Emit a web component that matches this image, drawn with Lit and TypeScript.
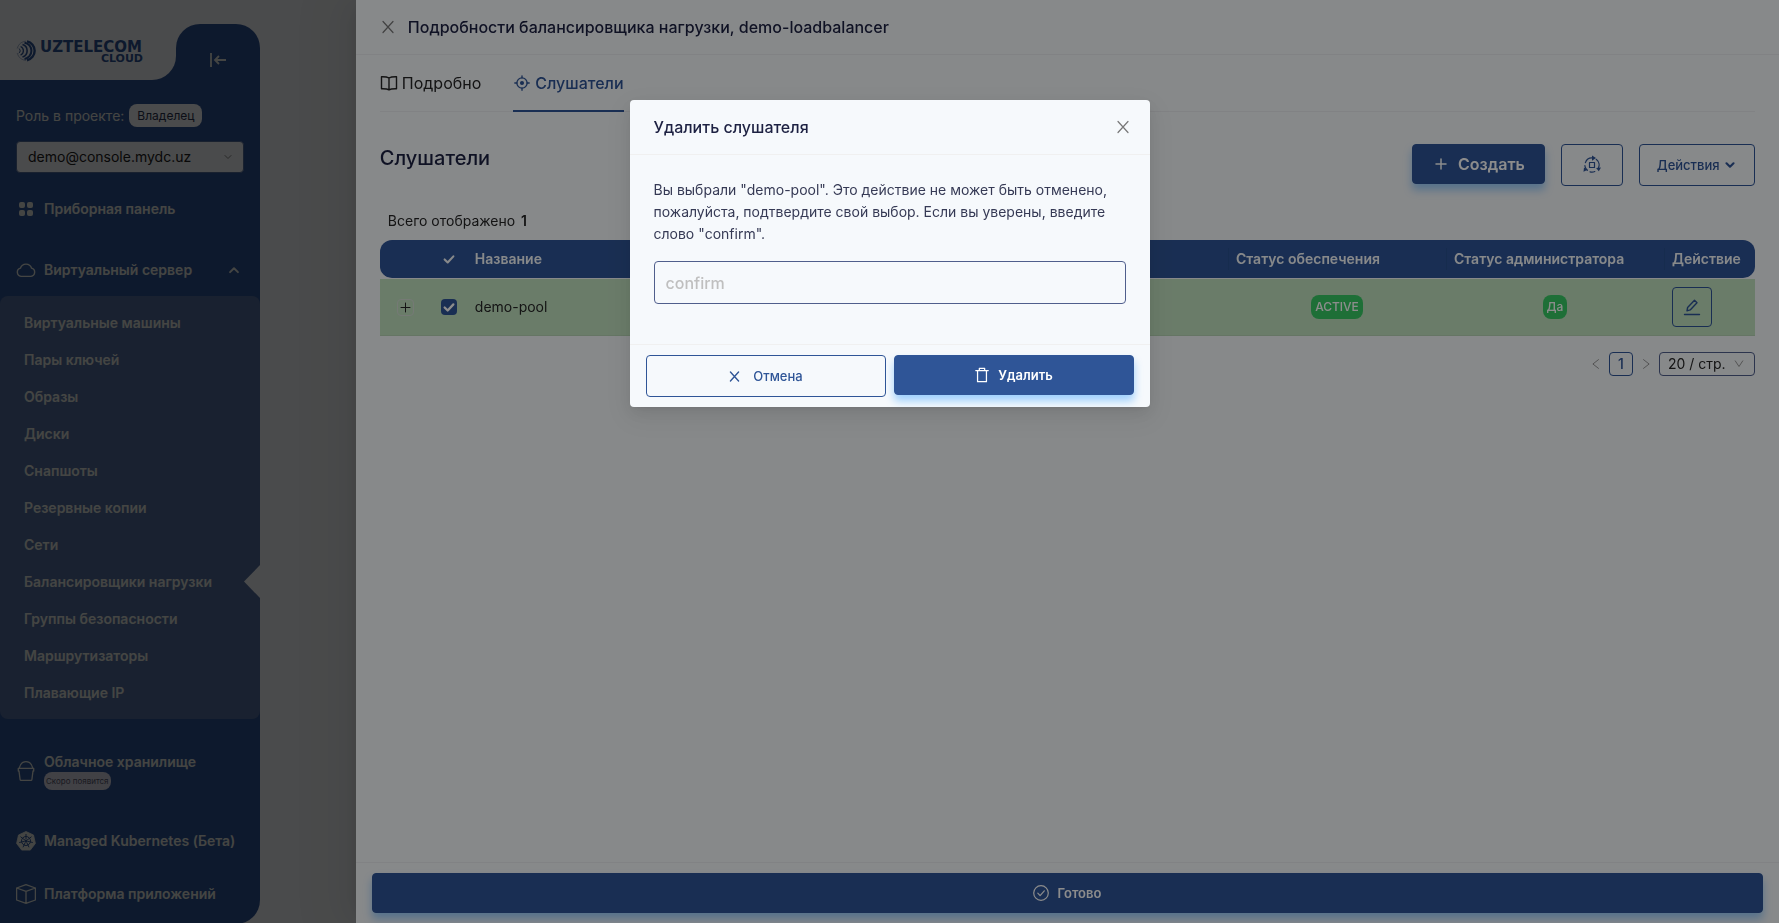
import { LitElement, html, css, svg, nothing } from "lit";
import { customElement } from "lit/decorators.js";
import { classMap } from "lit/directives/class-map.js";

const FONT = css`
  :host {
    font-family: Inter, "Open Sans", sans-serif;
    font-size: 14px;
    line-height: 22px;
  }
  *,
  *::before,
  *::after {
    box-sizing: border-box;
  }
  button,
  input,
  select {
    font: inherit;
    margin: 0;
    cursor: pointer;
  }
  svg {
    display: block;
    flex: none;
  }
`;

const icon = (size: number, box: string, body: unknown, width = 2) => html`
  <svg width=${size} height=${size} viewBox=${box} fill="none" stroke="currentColor" stroke-width=${width} stroke-linecap="round" stroke-linejoin="round" aria-hidden="true">${body}</svg>
`;

const closeIcon = (size: number, w = 1.2) => icon(size, "0 0 16 16", svg`<path d="M3 2.5 13 13.5M13 2.5 3 13.5" />`, w);
const chevron = (size: number, d: string, w: number) => icon(size, "0 0 16 16", svg`<path d=${d} />`, w);

const gridIcon = html`
  <svg width="20" height="20" viewBox="0 0 20 20" fill="currentColor" aria-hidden="true">
    <rect x="3" y="3" width="6" height="6" rx="2" /><rect x="11" y="3" width="6" height="6" rx="2" />
    <rect x="3" y="11" width="6" height="6" rx="2" /><rect x="11" y="11" width="6" height="6" rx="2" />
  </svg>
`;
const cloudIcon = icon(20, "0 0 20 20", svg`<path d="M5 16.400a4.200 4.200 0 0 1-.6-8.200 5.900 5.900 0 0 1 11.200 0 4.200 4.200 0 0 1-.6 8.200Z" />`, 1.4);
const bucketIcon = icon(20, "0 0 20 20", svg`<path d="M2.300 7.300h15.400v2.700h-.7L15.900 18.500q-.1.900-1 .9H5.100q-.9 0-1-.9L3 10H2.300ZM3.300 7C4.200 3 6.700.7 10 .7s5.800 2.300 6.700 6.300" />`, 1.3);
const cubeIcon = icon(20, "0 0 20 20", svg`<path d="M10 .7 19.400 4v12L10 19.300.6 16V4ZM.6 4 10 7.400 19.400 4M10 7.400v12" />`, 1.3);
const wheelIcon = html`
  <svg width="20" height="20" viewBox="0 0 20 20" aria-hidden="true">
    <path d="M10 .5 17.500 4 19.400 12.400 14.300 19.100H5.700L.6 12.400 2.500 4Z" fill="currentColor" stroke="currentColor" stroke-width=".8" stroke-linejoin="round" />
    <g fill="none" stroke="#2f5597" stroke-width="1">
      <circle cx="10" cy="10" r="4.500" />
      <path d="M10 3v5.500M15.500 5.700 11 9.200M16.800 11.500 11.300 10.300M13 16.300 10.700 11.300M7 16.300 9.300 11.300M3.200 11.500 8.700 10.300M4.500 5.700 9 9.200" />
    </g>
    <circle cx="10" cy="10" r="1.200" fill="#2f5597" />
  </svg>
`;

interface MenuEntry {
  label: string;
  active?: boolean;
}

const SERVER_ITEMS: MenuEntry[] = [
  { label: "Виртуальные машины" },
  { label: "Пары ключей" },
  { label: "Образы" },
  { label: "Диски" },
  { label: "Снапшоты" },
  { label: "Резервные копии" },
  { label: "Сети" },
  { label: "Балансировщики нагрузки", active: true },
  { label: "Группы безопасности" },
  { label: "Маршрутизаторы" },
  { label: "Плавающие IP" },
];

@customElement("side-bar")
export class SideBar extends LitElement {
  static styles = [
    FONT,
    css`
      :host {
        display: flex;
        flex-direction: column;
        width: 260px;
        min-height: 100vh;
        color: #e4e8e0;
      }
      .head {
        display: flex;
        height: 80px;
        background: linear-gradient(#f6f9fc 56px, #2f5597 56px);
      }
      .logo {
        width: 176px;
        padding: 32px 0 0 16px;
        background: #f6f9fc;
        border-bottom-right-radius: 24px;
      }
      .logo text {
        font-family: "DejaVu Sans", sans-serif;
        font-weight: 700;
      }
      .collapse {
        flex: 1;
        display: flex;
        align-items: center;
        justify-content: center;
        margin-top: 24px;
        padding: 16px 0 0;
        border: 0;
        border-radius: 24px 24px 0 0;
        background: #2f5597;
        color: inherit;
      }
      .body {
        flex: 1;
        display: flex;
        flex-direction: column;
        padding-top: 24px;
        background: #2f5597;
        border-bottom-right-radius: 24px;
      }
      .role {
        display: flex;
        align-items: center;
        gap: 5px;
        padding: 0 16px;
      }
      .badge {
        padding: 0 8px;
        border-radius: 8px;
        background: #f6f9fc;
        color: #2b3350;
        font-size: 12px;
        line-height: 23px;
      }
      .project {
        display: grid;
        align-items: center;
        margin: 14px 16px 19px;
      }
      .project > * {
        grid-area: 1 / 1;
      }
      .project select {
        appearance: none;
        height: 32px;
        padding: 0 11px;
        border: 1px solid #55709f;
        border-radius: 4px;
        background: #f6f9fc;
        color: #222;
      }
      .project svg {
        justify-self: end;
        margin-right: 12px;
        color: #8a8a8a;
        pointer-events: none;
      }
      .item {
        display: flex;
        align-items: center;
        gap: 8px;
        height: 33px;
        padding: 0 16px;
        color: inherit;
        font-weight: 600;
        text-decoration: none;
      }
      .item.server {
        margin: 28px 0 10px;
      }
      .item .end {
        margin-left: auto;
        margin-right: 3px;
      }
      .sub {
        display: flex;
        flex-direction: column;
        padding: 8px 0;
        border-radius: 8px;
        background: #5670a0;
      }
      .sub a {
        position: relative;
        padding: 0 24px;
        color: inherit;
        font-weight: 600;
        line-height: 37px;
        text-decoration: none;
      }
      .sub a.active::after {
        content: "";
        position: absolute;
        right: 0;
        top: 2px;
        width: 16px;
        height: 33px;
        background: #f6f9fc;
        clip-path: polygon(100% 0, 0 50%, 100% 100%);
      }
      .item.tall {
        height: 42px;
        margin: 31px 0 32px;
      }
      .stack {
        display: flex;
        flex-direction: column;
        align-items: flex-start;
        line-height: 20px;
      }
      .soon {
        padding: 0 2px;
        border-radius: 8px;
        background: #d9d9e8;
        color: #55586c;
        font-size: 8px;
        font-weight: 400;
        line-height: 18px;
      }
      .item.platform {
        margin: 20px 0 14px;
      }
    `,
  ];

  render() {
    return html`
      <div class="head">
        <div class="logo">
          <svg width="144" height="40" viewBox="0 0 144 40" role="img" aria-label="UZTELECOM CLOUD" fill="#2f5597">
            <g fill="none" stroke="#2f5597" transform="translate(0 8)">
              <path d="M11 1.400a9.600 9.600 0 0 1 0 18.800" stroke-width="2.400" />
              <path d="M8.500 2.700a8.200 8.200 0 0 1 0 16.200" stroke-width="2" />
              <path d="M6.500 4.500a6.600 6.600 0 0 1 0 12.600" stroke-width="1.600" />
              <path d="M4.600 6.500a4.700 4.700 0 0 1 0 8.600" stroke-width="1.300" />
              <path d="M2.800 8.500a2.600 2.600 0 0 1 0 4.600" stroke-width="1" />
              <path d="M1.200 8.500C2.500 4 5.500 1.600 10 1.200M1.200 13C2.500 17.500 5.500 20 10 20.400" stroke-width=".8" opacity=".5" />
            </g>
            <text x="24" y="20" font-size="15">UZTELECOM</text>
            <text x="127" y="30" font-size="11" text-anchor="end">CLOUD</text>
          </svg>
        </div>
        <button class="collapse" aria-label="Свернуть меню">
          <svg width="18" height="16" viewBox="0 0 18 16" fill="none" stroke="currentColor" stroke-width="1.800" aria-hidden="true">
            <path d="M2 1v14M17 8H6M10 4 6 8l4 4" />
          </svg>
        </button>
      </div>
      <div class="body">
        <div class="role"><span>Роль в проекте:</span><span class="badge">Владелец</span></div>
        <div class="project">
          <select aria-label="Проект"><option>demo@console.mydc.uz</option></select>
          ${chevron(8, "M2 5l6 6 6-6", 2)}
        </div>
        <a class="item" href="#dashboard">${gridIcon}<span>Приборная панель</span></a>
        <a class="item server" href="#server">
          ${cloudIcon}<span>Виртуальный сервер</span><span class="end">${chevron(14, "M3.500 10.500l4.500-4.500 4.500 4.500", 2.2)}</span>
        </a>
        <nav class="sub">
          ${SERVER_ITEMS.map((i) => html`<a href="#item" class=${classMap({ active: !!i.active })}>${i.label}</a>`)}
        </nav>
        <a class="item tall" href="#storage">
          ${bucketIcon}<span class="stack"><span>Облачное хранилище</span><span class="soon">Скоро появится</span></span>
        </a>
        <a class="item" href="#kubernetes">${wheelIcon}<span>Managed Kubernetes (Бета)</span></a>
        <a class="item platform" href="#platform">${cubeIcon}<span>Платформа приложений</span></a>
      </div>
    `;
  }
}

@customElement("listener-drawer")
export class ListenerDrawer extends LitElement {
  static styles = [
    FONT,
    css`
      :host {
        display: flex;
        flex-direction: column;
        background: #f6f9fc;
        color: #262626;
        box-shadow: -6px 0 16px -8px rgba(0, 0, 0, 0.08), -9px 0 28px rgba(0, 0, 0, 0.05), -12px 0 48px 16px rgba(0, 0, 0, 0.03);
      }
      header {
        display: flex;
        align-items: center;
        gap: 12px;
        height: 55px;
        padding: 0 24px;
        border-bottom: 1px solid #ebedf0;
      }
      h1,
      h2 {
        margin: 0;
        color: #1d2142;
        font-weight: 500;
      }
      h1 {
        font-size: 16px;
      }
      h2 {
        font-size: 20px;
        line-height: 28px;
      }
      .plain {
        display: flex;
        padding: 0;
        border: 0;
        background: none;
        color: #777;
      }
      main {
        flex: 1;
        padding: 0 24px;
      }
      .tabs {
        display: flex;
        gap: 32px;
        height: 57px;
        border-bottom: 1px solid #ebedf0;
      }
      .tab {
        display: flex;
        align-items: center;
        gap: 4px;
        height: 57px;
        padding: 0;
        border: 0 solid transparent;
        border-bottom-width: 2px;
        background: none;
        color: #262626;
        font-size: 16px;
      }
      .tab.on {
        border-bottom-color: #2f5597;
        color: #2f5597;
        font-weight: 500;
      }
      .bar {
        display: flex;
        align-items: flex-start;
        gap: 16px;
        margin-top: 32px;
      }
      .bar h2 {
        margin-right: auto;
      }
      .btn {
        display: flex;
        align-items: center;
        justify-content: center;
        height: 42px;
        padding: 0 16px;
        border: 1px solid #2f5597;
        border-radius: 4px;
        background: transparent;
        color: #2f5597;
        font-size: 13px;
        font-weight: 500;
      }
      .btn.menu {
        padding: 0 17px;
      }
      .btn.primary {
        gap: 8px;
        height: 40px;
        padding: 0 19px;
        background: #2f5597;
        color: #fff;
        font-weight: 600;
        box-shadow: 0 6px 8px rgba(24, 144, 255, 0.4);
      }
      .btn.create {
        font-size: 16px;
      }
      .btn.sync {
        padding: 0 20px;
      }
      .btn.edit {
        width: 40px;
        height: 40px;
        padding: 0;
      }
      .total {
        margin: 24px 8px 8px;
      }
      .total b {
        margin-left: 2px;
        font-weight: 600;
      }
      table {
        width: 100%;
        table-layout: fixed;
        border-collapse: separate;
        border-spacing: 0;
      }
      .c-expand {
        width: 51px;
      }
      .c-check {
        width: 36px;
      }
      .c-status {
        width: 218px;
      }
      .c-action {
        width: 91px;
      }
      th {
        height: 39px;
        padding: 0 8px;
        border-bottom: 1px solid #f6f9fc;
        background: #2f5597;
        background-clip: padding-box;
        color: #f6f9fc;
        font-weight: 600;
        text-align: left;
      }
      th.sep {
        background-image: linear-gradient(#29508f, #29508f);
        background-size: 1px 22px;
        background-position: left center;
        background-repeat: no-repeat;
      }
      th:first-child {
        border-radius: 12px 0 0 12px;
      }
      th:last-child {
        border-radius: 0 12px 12px 0;
      }
      td {
        height: 57px;
        padding: 0 8px;
        border-bottom: 1px solid #b8d6b6;
        background: #c2e2c0;
      }
      td.mid {
        text-align: center;
      }
      .center {
        display: flex;
        justify-content: center;
      }
      .expand {
        width: 17px;
        height: 17px;
        align-items: center;
        justify-content: center;
        border: 1px solid #d5dfd6;
        border-radius: 4px;
        color: #262626;
      }
      .check {
        display: grid;
        place-items: center;
      }
      .check > * {
        grid-area: 1 / 1;
      }
      .check input {
        appearance: none;
        width: 16px;
        height: 16px;
        border-radius: 4px;
        background: #2f5597;
      }
      .check svg {
        color: #fff;
        pointer-events: none;
      }
      .tag {
        display: inline-block;
        padding: 0 4px;
        border-radius: 8px;
        background: #38ca64;
        color: #fff;
        font-size: 12px;
        font-weight: 500;
        line-height: 24px;
      }
      .pages {
        display: flex;
        align-items: center;
        justify-content: flex-end;
        gap: 8px;
        margin-top: 16px;
      }
      .pages .plain {
        color: #999;
      }
      .page {
        width: 24px;
        height: 24px;
        padding: 0;
        border: 1px solid #2f5597;
        border-radius: 4px;
        background: none;
        color: #2f5597;
        font-weight: 500;
      }
      .size {
        display: grid;
        align-items: center;
        width: 96px;
      }
      .size > * {
        grid-area: 1 / 1;
      }
      .size select {
        appearance: none;
        height: 24px;
        padding: 0 8px;
        border: 1px solid #505f8c;
        border-radius: 4px;
        background: none;
        color: #262626;
      }
      .size svg {
        justify-self: end;
        margin-right: 11px;
        color: #999;
        pointer-events: none;
      }
      footer {
        padding: 10px 16px;
        border-top: 1px solid #ebedf0;
      }
      footer .btn {
        width: 100%;
      }
    `,
  ];

  render() {
    const check = chevron(14, "M3 8.500l3.500 3.500L13 5", 2.4);
    const smallCheck = chevron(14, "M3 8.500l3.500 3.500L13 5", 2.6);
    return html`
      <header>
        <button class="plain" aria-label="Закрыть">${closeIcon(16)}</button>
        <h1>Подробности балансировщика нагрузки, demo-loadbalancer</h1>
      </header>
      <main>
        <div class="tabs" role="tablist">
          <button class="tab" role="tab">
            ${icon(18, "0 0 18 18", svg`<path d="M9 4v11.500M9 4C7.500 3 5 2.600 1.500 2.700v12c3.300-.1 6 .1 7.500 1.100 1.500-1 4.200-1.200 7.500-1.100v-12C13 2.600 10.500 3 9 4Z" />`, 1.4)}
            Подробно
          </button>
          <button class="tab on" role="tab" aria-selected="true">
            ${icon(18, "-1 -1 20 20", svg`<circle cx="9" cy="9" r="5.700" /><circle cx="9" cy="9" r="1.500" fill="currentColor" /><path d="M9 1v2.300M9 14.700V17M1 9h2.300M14.700 9H17" />`, 1.5)}
            Слушатели
          </button>
        </div>
        <div class="bar">
          <h2>Слушатели</h2>
          <button class="btn primary create">${icon(18, "0 0 18 18", svg`<path d="M9 4v10M4 9h10" />`, 1.5)}Создать</button>
          <button class="btn sync" aria-label="Обновить">
            ${icon(
              20,
              "0 0 20 20",
              svg`
                <path d="M7.500 7.500h5v5h-5ZM3.400 7.600A7.100 7.100 0 0 1 11 3M14.200 4.300A7.100 7.100 0 0 1 16.300 13.200M12.800 16.500A7.100 7.100 0 0 1 8 16.800M5.300 15.300A7.100 7.100 0 0 1 2.900 10.500" />
                <path stroke="none" fill="currentColor" d="M10 .4l4 2.700-4 2.700ZM19 12.600l-2.200 3.600-2.700-3.300ZM1.500 16.800l.5-4.300 3.600 2.300Z" />
              `,
              1.2,
            )}
          </button>
          <button class="btn menu">Действия&nbsp;${chevron(14, "M4 6l4 4 4-4", 2.4)}</button>
        </div>
        <div class="total">Всего отображено <b>1</b></div>
        <table>
          <colgroup>
            <col class="c-expand" /><col class="c-check" /><col /><col class="c-status" /><col class="c-status" /><col class="c-action" />
          </colgroup>
          <thead>
            <tr>
              <th></th>
              <th><span class="center">${check}</span></th>
              <th>Название</th>
              <th class="sep">Статус обеспечения</th>
              <th class="sep">Статус администратора</th>
              <th class="sep">Действие</th>
            </tr>
          </thead>
          <tbody>
            <tr>
              <td>
                <div class="center">
                  <button class="plain expand" aria-label="Развернуть">${icon(11, "0 0 11 11", svg`<path d="M5.500 1v9M1 5.500h9" />`, 1)}</button>
                </div>
              </td>
              <td><label class="check"><input type="checkbox" checked aria-label="demo-pool" />${smallCheck}</label></td>
              <td>demo-pool</td>
              <td class="mid"><span class="tag">ACTIVE</span></td>
              <td class="mid"><span class="tag">Да</span></td>
              <td>
                <button class="btn edit" aria-label="Изменить">
                  ${icon(18, "0 0 18 18", svg`<path d="M1.500 16.500h15M4 12.800l.6-3.300 6.900-7.200 2.500 2.400-6.800 7.200Z" />`, 1.4)}
                </button>
              </td>
            </tr>
          </tbody>
        </table>
        <div class="pages">
          <button class="plain" aria-label="Назад">${chevron(10, "M12 1 3 8l9 7", 1.6)}</button>
          <button class="page">1</button>
          <button class="plain" aria-label="Вперёд">${chevron(10, "M4 1l9 7-9 7", 1.6)}</button>
          <div class="size">
            <select aria-label="Строк на странице"><option>20 / стр.</option></select>
            ${chevron(10, "M2 3l6 9 6-9", 1.6)}
          </div>
        </div>
      </main>
      <footer>
        <button class="btn primary">
          ${icon(16, "0 0 16 16", svg`<circle cx="8" cy="8" r="7.300" /><path d="M4.800 8.200l2.300 2.400 4.200-4.800" />`, 1.2)}Готово
        </button>
      </footer>
    `;
  }
}

@customElement("confirm-dialog")
export class ConfirmDialog extends LitElement {
  static styles = [
    FONT,
    css`
      :host {
        display: block;
        width: 520px;
        overflow: hidden;
        border-radius: 4px;
        background: #f6f9fc;
        color: #363a55;
        box-shadow: 0 3px 6px -4px rgba(0, 0, 0, 0.12), 0 6px 16px rgba(0, 0, 0, 0.08), 0 9px 28px 8px rgba(0, 0, 0, 0.05);
      }
      header {
        display: flex;
        align-items: center;
        justify-content: space-between;
        height: 55px;
        padding: 0 19px 0 24px;
        border-bottom: 1px solid #f0f0f0;
      }
      h2 {
        margin: 0;
        color: #1d2142;
        font-size: 16px;
        font-weight: 500;
      }
      .close {
        display: flex;
        padding: 0;
        border: 0;
        background: none;
        color: #777;
      }
      .body {
        display: flex;
        flex-direction: column;
        gap: 16px;
        padding: 24px 24px 40px;
      }
      input {
        width: 100%;
        height: 43px;
        padding: 0 11px;
        border: 1px solid #505f8c;
        border-radius: 4px;
        outline: 0;
        background: transparent;
        font-size: 16px;
        font-weight: 500;
      }
      input::placeholder {
        color: #bfbfbf;
      }
      footer {
        display: grid;
        grid-template-columns: 1fr 1fr;
        align-items: start;
        gap: 8px;
        padding: 10px 16px;
        border-top: 1px solid #f0f0f0;
      }
      footer button {
        display: flex;
        align-items: center;
        justify-content: center;
        gap: 12px;
        height: 42px;
        border: 1px solid #2f5597;
        border-radius: 4px;
        background: none;
        color: #2f5597;
        font-size: 13px;
        font-weight: 500;
      }
      footer .go {
        gap: 8px;
        height: 40px;
        background: #2f5597;
        color: #fff;
        font-weight: 600;
        box-shadow: 0 6px 8px rgba(24, 144, 255, 0.4);
      }
    `,
  ];

  render() {
    return html`
      <header>
        <h2>Удалить слушателя</h2>
        <button class="close" aria-label="Закрыть">${closeIcon(16)}</button>
      </header>
      <div class="body">
        <label for="word">
          Вы выбрали "demo-pool". Это действие не может быть отменено, пожалуйста, подтвердите свой выбор. Если вы уверены, введите слово "confirm".
        </label>
        <input id="word" placeholder="confirm" />
      </div>
      <footer>
        <button>${closeIcon(13, 1.7)}Отмена</button>
        <button class="go">
          ${icon(16, "1 0 16 18", svg`<path d="M2 4h14M6 4V1.500h6V4M4 4v12.500h10V4" />`, 1.4)}Удалить
        </button>
      </footer>
    `;
  }
}

@customElement("app-root")
export class AppRoot extends LitElement {
  static styles = css`
    :host {
      display: block;
      min-height: 100vh;
      background: #f6f9fc;
    }
    .mask {
      position: fixed;
      inset: 0;
      background: rgba(0, 0, 0, 0.45);
    }
    .drawer {
      position: fixed;
      inset: 0 0 0 auto;
      width: 80%;
    }
    .wrap {
      position: fixed;
      inset: 0;
      display: flex;
      justify-content: center;
      align-items: flex-start;
      padding-top: 100px;
      background: rgba(0, 0, 0, 0.45);
    }
  `;

  open = true;

  render() {
    return html`
      <side-bar></side-bar>
      <div class="mask"></div>
      <listener-drawer class="drawer"></listener-drawer>
      ${this.open ? html`<div class="wrap"><confirm-dialog role="dialog" aria-modal="true"></confirm-dialog></div>` : nothing}
    `;
  }
}
